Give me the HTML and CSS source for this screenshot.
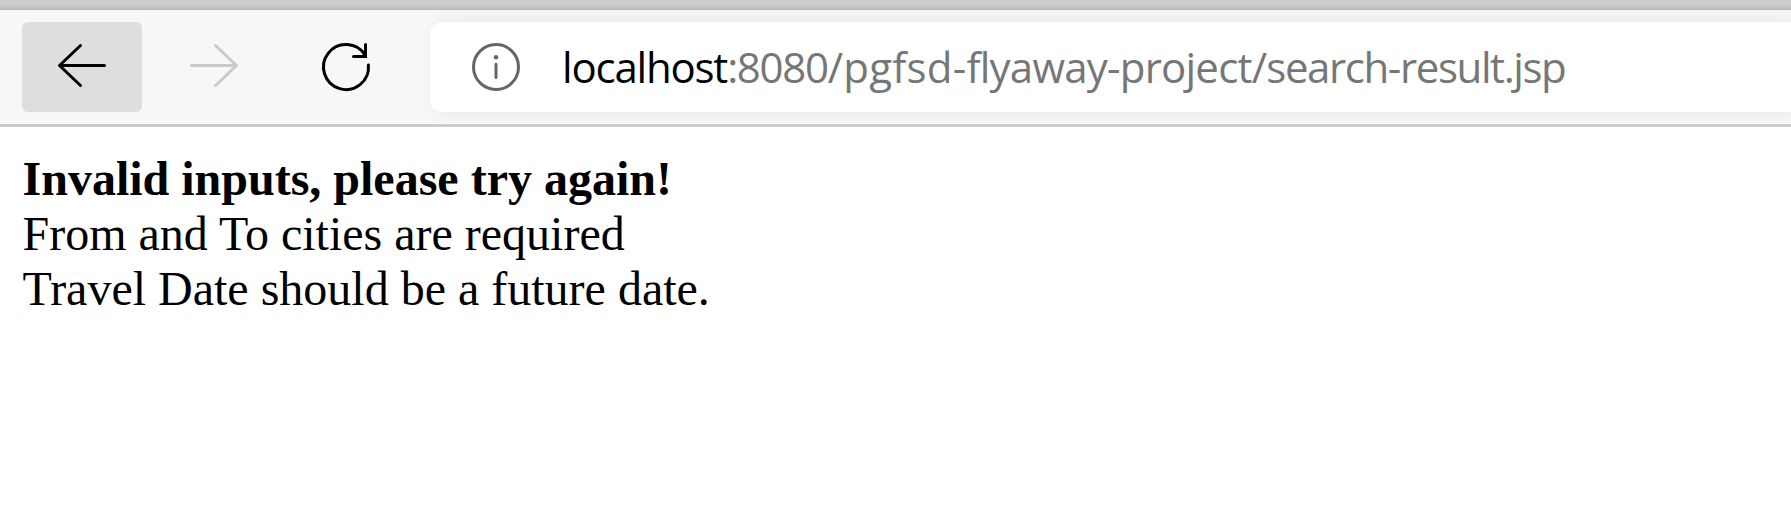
FILE: index.html
```html
<!DOCTYPE html>
<html lang="en">
<head>
<meta charset="utf-8">
<title>search-result.jsp</title>
<link rel="stylesheet" href="styles.css">
</head>
<body>
<div class="tabstrip"></div>
<header class="toolbar">
  <button class="nav back" aria-label="Back">
    <svg width="120" height="90" viewBox="0 0 120 90"><path d="M82.500 43.500H38M58.500 23.500L37.500 43.500L58.500 63.500"/></svg>
  </button>
  <button class="nav forward" aria-label="Forward">
    <svg width="120" height="90" viewBox="0 0 120 90"><path d="M37.500 43.500H82M61.500 23.500L82.500 43.500L61.500 63.500"/></svg>
  </button>
  <button class="nav reload" aria-label="Refresh">
    <svg width="120" height="90" viewBox="0 0 120 90"><path d="M82.400 43A22.500 22.500 0 1 1 79.300 33.500"/><path class="square" d="M79.500 22.500V34.500H67.500"/></svg>
  </button>
  <div class="address">
    <svg class="info" width="48" height="48" viewBox="0 0 48 48"><circle cx="24" cy="24" r="22.500"/><path d="M24 21.200V34.500"/><circle class="dot" cx="24" cy="14.300" r="2.200"/></svg>
    <div class="url"><span class="host">localhost</span><span class="path"><span class="port">:8080</span><span class="root">/pgfsd-</span>flyaway-project/<span class="file">search-result.jsp</span></span></div>
  </div>
</header>
<main class="page">
  <b class="title">Invalid inputs, please try again!</b>
  <div class="from">From and To cities are required</div>
  <div class="date">Travel Date should be a future date.</div>
</main>
</body>
</html>
```
FILE: styles.css
```css
* { box-sizing: border-box; }
body { margin: 0; background: #fff; color: #000; overflow: hidden; }
.tabstrip { height: 10px; background: linear-gradient(#cdcdcd 50%, #b8b8b8); }
.toolbar {
  display: flex;
  height: 117px;
  padding: 12px 0 12px 22px;
  background: #f7f7f7;
  border-bottom: 3px solid #cdcdcd;
  overflow: hidden;
}
.nav {
  flex: none;
  width: 120px;
  height: 90px;
  margin: 0 12px 0 0;
  padding: 0;
  border: 0;
  border-radius: 6px;
  background: none;
}
.nav svg { display: block; fill: none; stroke: #000; stroke-width: 3; stroke-linecap: round; stroke-linejoin: round; }
.back { background: #dedede; }
.forward svg { stroke: #cacaca; }
.nav .square { stroke-linejoin: miter; }
.address {
  display: flex;
  align-items: flex-start;
  flex: 1;
  height: 90px;
  margin-left: 12px;
  padding-left: 42px;
  background: #fff;
  border-radius: 12px 0 0 12px;
  box-shadow: 6px 0 18px rgba(0, 0, 0, .08);
}
.info { flex: none; margin-top: 21px; fill: none; stroke: #666; stroke-width: 3; stroke-linecap: round; }
.info .dot { fill: #666; stroke: none; }
.url {
  margin: 15px 0 0 42px;
  font: 42px/60px "Open Sans", sans-serif;
  white-space: nowrap;
  font-variant-ligatures: none;
}
.host { letter-spacing: -1.2px; }
.path { color: #767676; letter-spacing: -.78px; }
.port { letter-spacing: -1.3px; }
.root { letter-spacing: .2px; }
.file { letter-spacing: -1.4px; }
.page { padding: 24px 22.5px; font: 48px/55px "Liberation Serif", serif; white-space: nowrap; }
.title { display: block; }
```
